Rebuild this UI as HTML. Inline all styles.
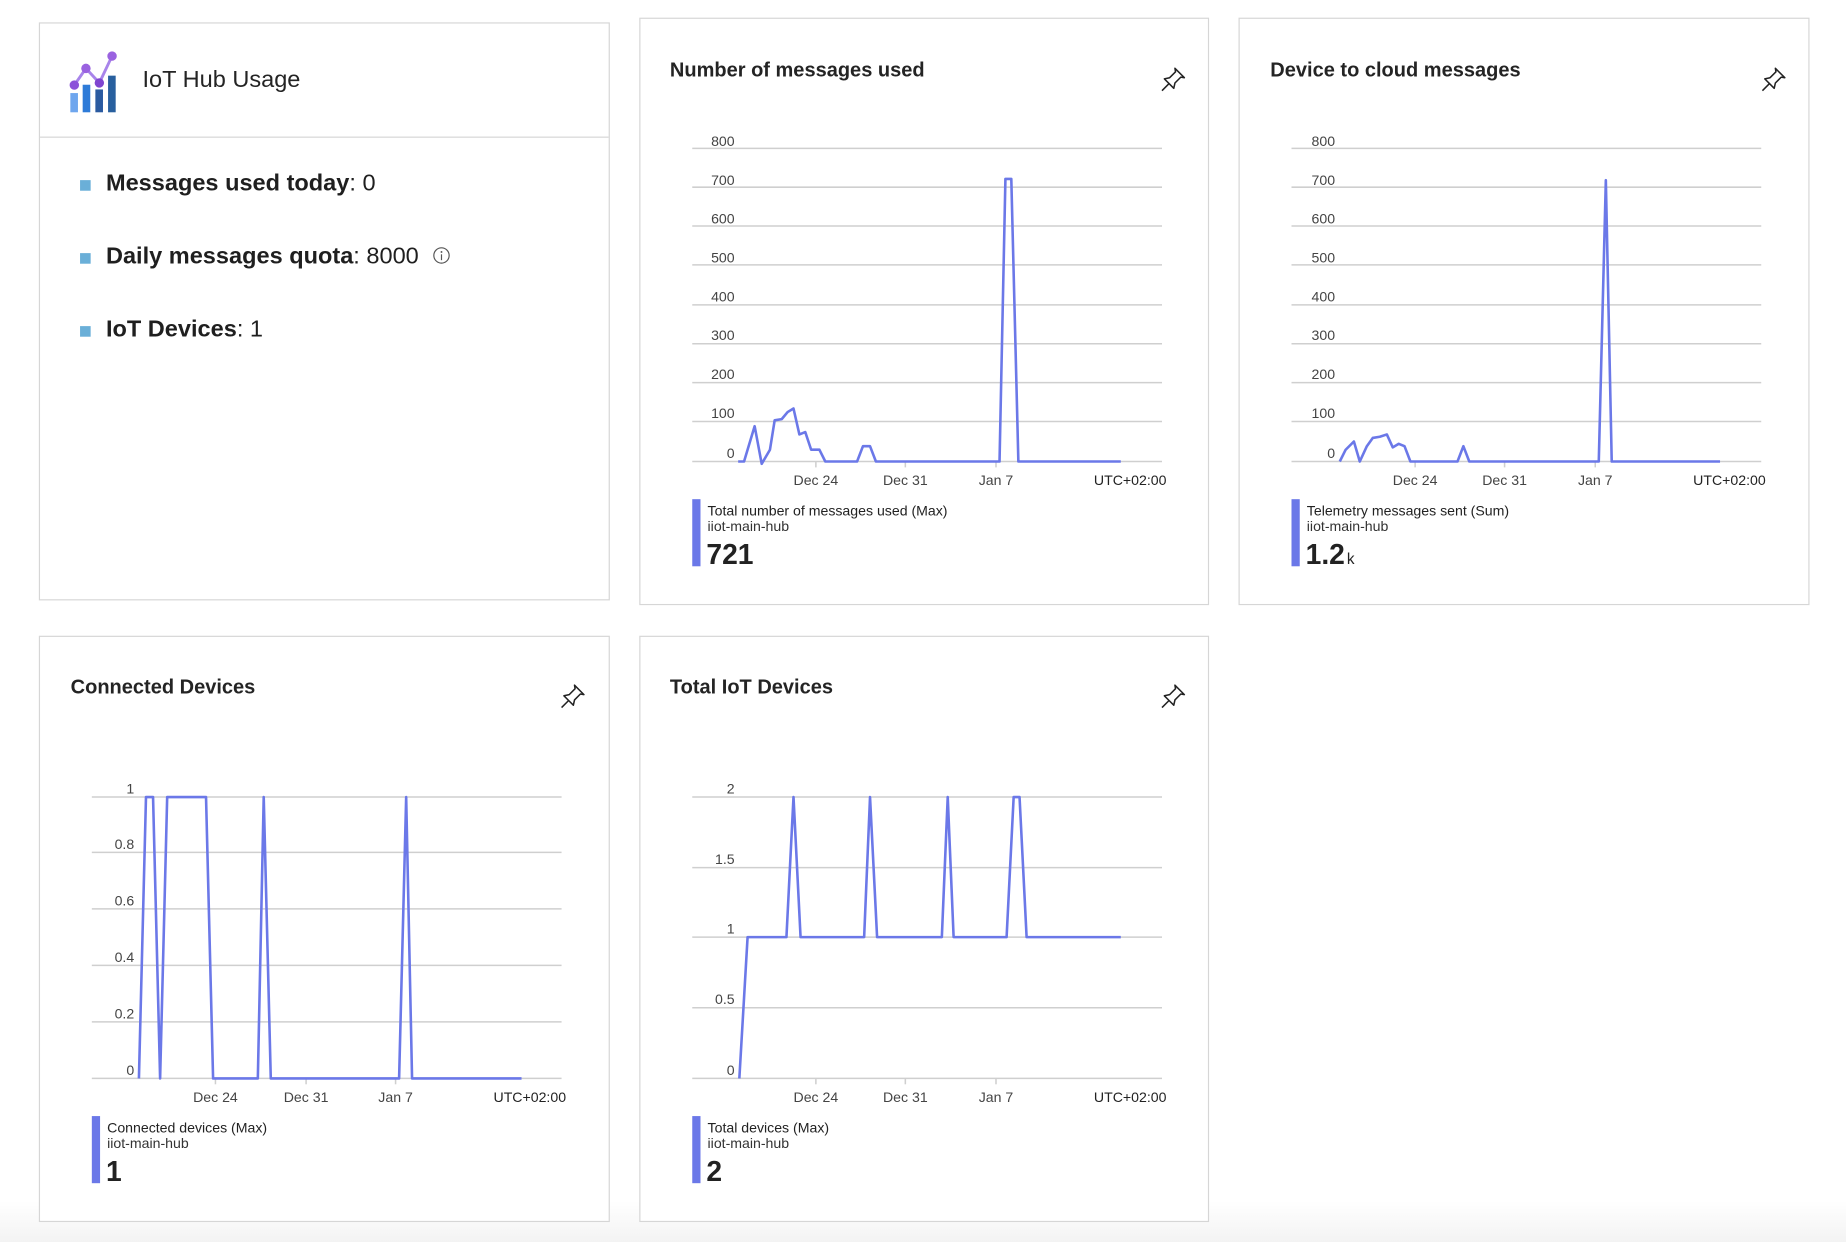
<!DOCTYPE html>
<html><head><meta charset="utf-8"><style>
html,body{margin:0;padding:0;background:#fff;overflow:hidden}
body{width:1846px;height:1242px;position:relative}
#w{position:absolute;left:0;top:0;width:1568px;height:1055px;transform:scale(1.17730);transform-origin:0 0;font-family:"Liberation Sans",sans-serif;color:#1f1f1f;background:linear-gradient(to bottom,#fff 0,#fff 1020px,#f3f3f3 1055px)}
.card{position:absolute;border:1px solid #d6d6d6;background:#fff;box-sizing:border-box}
.t{position:absolute;font-weight:bold;font-size:17px;color:#242424}
svg text{font-family:"Liberation Sans",sans-serif}
.li{position:relative;height:62px;white-space:nowrap}
.li .sq{position:absolute;left:0;top:9px;width:9px;height:9px;background:#6aafd8}
.li .tx{position:absolute;left:22px;top:0;white-space:nowrap}
</style></head><body><div id="w">

<div class="card" style="left:33px;top:19px;width:485px;height:491px">
  <div style="position:absolute;left:0;right:0;top:96px;border-top:1px solid #d6d6d6"></div>
  <svg style="position:absolute;left:22px;top:23px" width="46" height="53" viewBox="93 98 133 172">
    <rect x="97" y="215" width="21" height="53" fill="#6ea6ee"/>
    <rect x="131" y="192" width="21" height="76" fill="#2e7bd8"/>
    <rect x="166" y="205" width="21" height="63" fill="#2a5aa0"/>
    <rect x="201" y="167" width="21" height="101" fill="#285f9e"/>
    <polyline points="108,193 140,147 177,187 212,113" fill="none" stroke="#a884ea" stroke-width="8"/>
    <circle cx="108" cy="193" r="13" fill="#8c52d9"/><circle cx="140" cy="147" r="13" fill="#9a62e0"/>
    <circle cx="177" cy="187" r="13" fill="#7f45d0"/><circle cx="212" cy="113" r="13" fill="#9a62e0"/>
  </svg>
  <div style="position:absolute;left:87px;top:37px;font-size:20px;color:#242424">IoT Hub Usage</div>
  <div style="position:absolute;left:34px;top:124px;width:440px;font-size:20px;line-height:24px">
    <div class="li"><span class="sq"></span><span class="tx"><b>Messages used today</b>: 0</span></div>
    <div class="li"><span class="sq"></span><span class="tx"><b>Daily messages quota</b>: 8000 <svg width="16" height="16" viewBox="0 0 16 16" style="vertical-align:-1px;margin-left:6px"><circle cx="8" cy="8" r="6.5" fill="none" stroke="#555" stroke-width="1"/><circle cx="8" cy="5" r=".8" fill="#555"/><rect x="7.5" y="7" width="1" height="5" fill="#555"/></svg></span></div>
    <div class="li"><span class="sq"></span><span class="tx"><b>IoT Devices</b>: 1</span></div>
  </div>
</div>

<div class="card" style="left:543px;top:15px;width:484px;height:499px">
  <div class="t" style="left:25px;top:34px">Number of messages used</div>
</div>
<div class="card" style="left:1052px;top:15px;width:485px;height:499px">
  <div class="t" style="left:26px;top:34px">Device to cloud messages</div>
</div>
<div class="card" style="left:33px;top:540px;width:485px;height:498px">
  <div class="t" style="left:26px;top:33px">Connected Devices</div>
</div>
<div class="card" style="left:543px;top:540px;width:484px;height:498px">
  <div class="t" style="left:25px;top:33px">Total IoT Devices</div>
</div>

<svg width="1568" height="1055" style="position:absolute;left:0;top:0" font-size="12" fill="#333">
<g stroke="#cfcfcf" stroke-width="1.3">
<line x1="588" x2="987" y1="126" y2="126"/><line x1="588" x2="987" y1="159" y2="159"/><line x1="588" x2="987" y1="192" y2="192"/><line x1="588" x2="987" y1="225" y2="225"/><line x1="588" x2="987" y1="259" y2="259"/><line x1="588" x2="987" y1="292" y2="292"/><line x1="588" x2="987" y1="325" y2="325"/><line x1="588" x2="987" y1="358" y2="358"/><line x1="588" x2="987" y1="392" y2="392"/>
<line x1="693" x2="693" y1="392" y2="397"/><line x1="769" x2="769" y1="392" y2="397"/><line x1="846" x2="846" y1="392" y2="397"/>
<line x1="1097" x2="1496" y1="126" y2="126"/><line x1="1097" x2="1496" y1="159" y2="159"/><line x1="1097" x2="1496" y1="192" y2="192"/><line x1="1097" x2="1496" y1="225" y2="225"/><line x1="1097" x2="1496" y1="259" y2="259"/><line x1="1097" x2="1496" y1="292" y2="292"/><line x1="1097" x2="1496" y1="325" y2="325"/><line x1="1097" x2="1496" y1="358" y2="358"/><line x1="1097" x2="1496" y1="392" y2="392"/>
<line x1="1202" x2="1202" y1="392" y2="397"/><line x1="1278" x2="1278" y1="392" y2="397"/><line x1="1355" x2="1355" y1="392" y2="397"/>
<line x1="78" x2="477" y1="677" y2="677"/><line x1="78" x2="477" y1="724" y2="724"/><line x1="78" x2="477" y1="772" y2="772"/><line x1="78" x2="477" y1="820" y2="820"/><line x1="78" x2="477" y1="868" y2="868"/><line x1="78" x2="477" y1="916" y2="916"/>
<line x1="183" x2="183" y1="916" y2="921"/><line x1="260" x2="260" y1="916" y2="921"/><line x1="336" x2="336" y1="916" y2="921"/>
<line x1="588" x2="987" y1="677" y2="677"/><line x1="588" x2="987" y1="737" y2="737"/><line x1="588" x2="987" y1="796" y2="796"/><line x1="588" x2="987" y1="856" y2="856"/><line x1="588" x2="987" y1="916" y2="916"/>
<line x1="693" x2="693" y1="916" y2="921"/><line x1="769" x2="769" y1="916" y2="921"/><line x1="846" x2="846" y1="916" y2="921"/>
</g>
<g text-anchor="end" fill="#444">
<text x="624" y="124">800</text><text x="624" y="157">700</text><text x="624" y="190">600</text><text x="624" y="223">500</text><text x="624" y="256">400</text><text x="624" y="289">300</text><text x="624" y="322">200</text><text x="624" y="355">100</text><text x="624" y="389">0</text>
<text x="1134" y="124">800</text><text x="1134" y="157">700</text><text x="1134" y="190">600</text><text x="1134" y="223">500</text><text x="1134" y="256">400</text><text x="1134" y="289">300</text><text x="1134" y="322">200</text><text x="1134" y="355">100</text><text x="1134" y="389">0</text>
<text x="114" y="674">1</text><text x="114" y="721">0.8</text><text x="114" y="769">0.6</text><text x="114" y="817">0.4</text><text x="114" y="865">0.2</text><text x="114" y="913">0</text>
<text x="624" y="674">2</text><text x="624" y="734">1.5</text><text x="624" y="793">1</text><text x="624" y="853">0.5</text><text x="624" y="913">0</text>
</g>
<g text-anchor="middle" fill="#444">
<text x="693" y="412">Dec 24</text><text x="769" y="412">Dec 31</text><text x="846" y="412">Jan 7</text><text x="960" y="412" fill="#222">UTC+02:00</text>
<text x="1202" y="412">Dec 24</text><text x="1278" y="412">Dec 31</text><text x="1355" y="412">Jan 7</text><text x="1469" y="412" fill="#222">UTC+02:00</text>
<text x="183" y="936">Dec 24</text><text x="260" y="936">Dec 31</text><text x="336" y="936">Jan 7</text><text x="450" y="936" fill="#222">UTC+02:00</text>
<text x="693" y="936">Dec 24</text><text x="769" y="936">Dec 31</text><text x="846" y="936">Jan 7</text><text x="960" y="936" fill="#222">UTC+02:00</text>
</g>
<g fill="none" stroke="#6b78e8" stroke-width="2.2" stroke-linejoin="round">
<polyline points="627,392 632,392 641,362 647,394 654,382 658,357 664,356 669,350 674,347 679,369 684,367 689,382 696,382 701,392 728,392 733,379 739,379 744,392 849,392 854,152 859,152 865,392 952,392"/>
<polyline points="1138,392 1143,382 1150,375 1155,392 1161,379 1166,372 1172,371 1178,369 1183,380 1188,377 1193,379 1198,392 1238,392 1243,379 1248,392 1358,392 1364,153 1369,392 1461,392"/>
<polyline points="118,916 124,677 130,677 136,916 142,677 175,677 181,916 219,916 224,677 230,916 339,916 345,677 350,916 443,916"/>
<polyline points="628,916 635,796 668,796 674,677 680,796 734,796 739,677 745,796 800,796 805,677 810,796 855,796 861,677 866,677 872,796 952,796"/>
</g>
<g fill="#6b78e8"><rect x="588" y="424" width="7" height="57"/><rect x="1097" y="424" width="7" height="57"/><rect x="78" y="948" width="7" height="57"/><rect x="588" y="948" width="7" height="57"/></g>
<g fill="#222">
<text x="601" y="438">Total number of messages used (Max)</text><text x="601" y="451" fill="#333">iiot-main-hub</text><text x="600" y="479" font-size="24" font-weight="bold">721</text>
<text x="1110" y="438">Telemetry messages sent (Sum)</text><text x="1110" y="451" fill="#333">iiot-main-hub</text><text x="1109" y="479" font-size="24" font-weight="bold">1.2</text><text x="1144" y="479" font-size="13">k</text>
<text x="91" y="962">Connected devices (Max)</text><text x="91" y="975" fill="#333">iiot-main-hub</text><text x="90" y="1003" font-size="24" font-weight="bold">1</text>
<text x="601" y="962">Total devices (Max)</text><text x="601" y="975" fill="#333">iiot-main-hub</text><text x="600" y="1003" font-size="24" font-weight="bold">2</text>
</g>
<g fill="none" stroke="#222" stroke-width="1.3" stroke-linejoin="round">
<path transform="translate(985,55)" d="M2 22 L8 16 M8 16 L4 12 L8.5 11 L13.5 6 L13 3 L21 11 L18 10.5 L13 15.5 L12 20 Z"/>
<path transform="translate(1495,55)" d="M2 22 L8 16 M8 16 L4 12 L8.5 11 L13.5 6 L13 3 L21 11 L18 10.5 L13 15.5 L12 20 Z"/>
<path transform="translate(475,579)" d="M2 22 L8 16 M8 16 L4 12 L8.5 11 L13.5 6 L13 3 L21 11 L18 10.5 L13 15.5 L12 20 Z"/>
<path transform="translate(985,579)" d="M2 22 L8 16 M8 16 L4 12 L8.5 11 L13.5 6 L13 3 L21 11 L18 10.5 L13 15.5 L12 20 Z"/>
</g>
</svg>
</div></body></html>
